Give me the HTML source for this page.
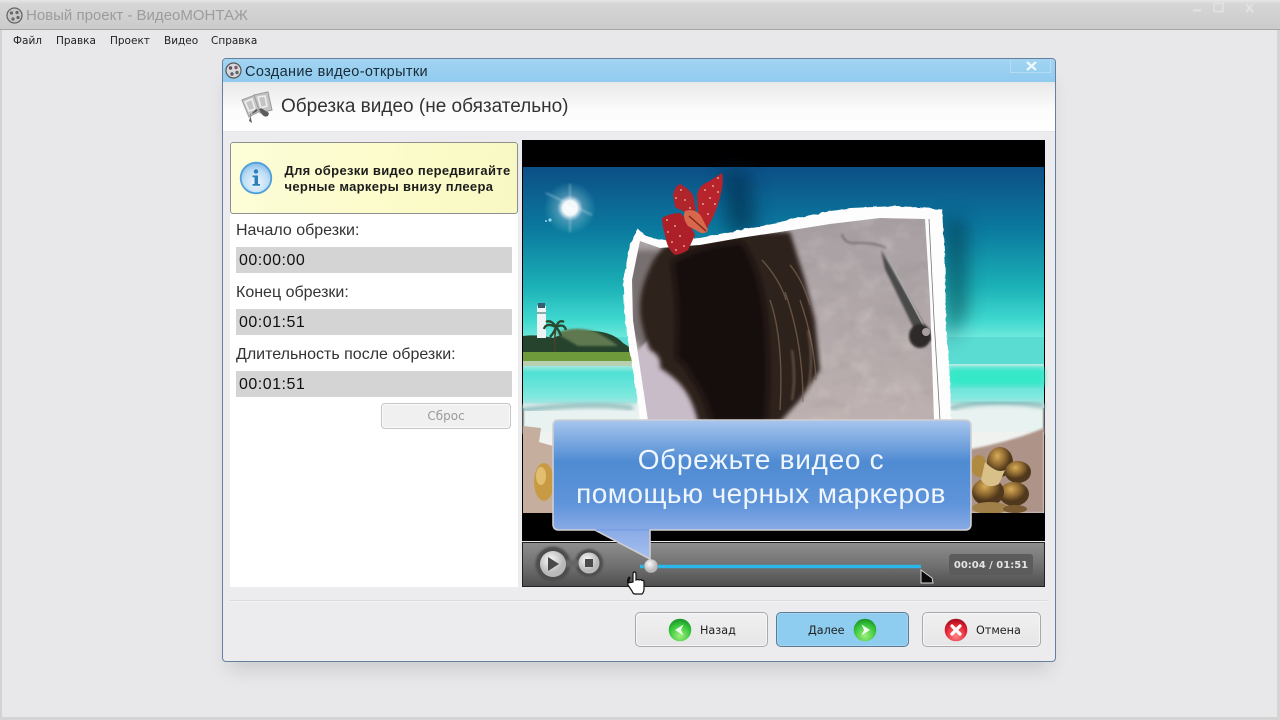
<!DOCTYPE html>
<html lang="ru"><head><meta charset="utf-8"><title>ВидеоМОНТАЖ</title>
<style>
*{box-sizing:border-box}
html,body{margin:0;padding:0}
body{width:1280px;height:720px;overflow:hidden;position:relative;background:#e8e8ea;font-family:"DejaVu Sans","Liberation Sans",sans-serif;color:#111}
.a{position:absolute;white-space:nowrap}
.ls{font-family:"Liberation Sans",sans-serif}
.fld{position:absolute;left:236px;width:276px;height:26px;background:#d4d4d4;font:16px/28px "Liberation Sans",sans-serif;padding-left:3px;color:#111;letter-spacing:.5px}
.lbl{position:absolute;left:236px;font:16px/20px "Liberation Sans",sans-serif;color:#333;white-space:nowrap}
.btn{position:absolute;top:612px;height:35px;border:1px solid #a9a9ab;border-radius:5px;background:linear-gradient(#f0f0f0,#e6e6e8);box-shadow:inset 0 0 0 1px #f6f6f6;font:11.2px/35px "DejaVu Sans",sans-serif;color:#222}
.btn span{position:absolute;top:0;line-height:35px}
.btn svg{position:absolute;top:5px}
.m{position:absolute;top:34px;font:10.5px/14px "DejaVu Sans",sans-serif;color:#222;white-space:nowrap}
</style></head><body>
<!-- main window frame -->
<div class="a" style="left:0;top:0;width:1280px;height:30px;background:linear-gradient(#e6e6e6 0,#d6d6d6 4px,#cbcbcb 100%);border-bottom:1px solid #a6a6a6"></div>
<div class="a" style="left:0;top:30px;width:2px;height:690px;background:#d2d2d2"></div>
<div class="a" style="left:1277px;top:30px;width:3px;height:690px;background:#d4d4d4"></div>
<div class="a" style="left:0;top:717px;width:1280px;height:3px;background:#d4d4d4"></div>
<svg class="a" style="left:6px;top:7px" width="17" height="17" viewBox="0 0 17 17"><circle cx="8.5" cy="8.5" r="7.5" fill="#c8c8c8" stroke="#666" stroke-width="1.3"/><circle cx="5.5" cy="6" r="1.6" fill="#666"/><circle cx="11" cy="5.5" r="1.6" fill="#666"/><circle cx="12" cy="10.5" r="1.6" fill="#666"/><circle cx="7" cy="12" r="1.6" fill="#666"/></svg>
<div class="a ls" style="left:26px;top:6px;font-size:15px;line-height:19px;color:#9c9c9c">Новый проект - ВидеоМОНТАЖ</div>
<svg class="a" style="left:1190px;top:4px" width="14" height="10" fill="none" stroke="#e2e2e2" stroke-width="2"><path d="M3 6.500h8"/></svg>
<svg class="a" style="left:1212px;top:2px" width="14" height="11" fill="none" stroke="#e2e2e2" stroke-width="1.6"><rect x="2" y="1.5" width="9" height="8"/></svg>
<svg class="a" style="left:1244px;top:3px" width="12" height="11" fill="none" stroke="#e2e2e2" stroke-width="2"><path d="M2 1l7 8M9 1l-7 8"/></svg>
<div class="m" style="left:13px">Файл</div><div class="m" style="left:56px">Правка</div><div class="m" style="left:110px">Проект</div><div class="m" style="left:164px">Видео</div><div class="m" style="left:211px">Справка</div>

<!-- dialog -->
<div class="a" style="left:222px;top:58px;width:834px;height:604px;background:#ececee;border:1px solid #64809e;border-radius:4px;box-shadow:0 14px 18px -6px rgba(0,0,0,.12)"></div>
<div class="a" style="left:223px;top:59px;width:832px;height:23px;background:linear-gradient(#a3d4f2,#90cbee);border-radius:3px 3px 0 0"></div>
<div class="a" style="left:223px;top:82px;width:832px;height:50px;background:linear-gradient(#e8e8e8,#fbfbfb 55%,#fff);border-bottom:1px solid #e6e6e6"></div>
<div class="a" style="left:1010px;top:59px;width:41px;height:14px;border:1px solid #b4dcf4;border-top:0"></div>
<svg class="a" style="left:1026px;top:61px" width="11" height="10" fill="none" stroke="#eef8fd" stroke-width="2.2"><path d="M1 1l9 8M10 1l-9 8"/></svg>
<svg class="a" style="left:225px;top:62px" width="17" height="17" viewBox="0 0 17 17"><circle cx="8.5" cy="8.5" r="7.5" fill="#d8d8d8" stroke="#555" stroke-width="1.2"/><circle cx="5.5" cy="6" r="1.7" fill="#5a4f6a"/><circle cx="11" cy="5.5" r="1.7" fill="#7a5a70"/><circle cx="12" cy="10.5" r="1.7" fill="#5a6a60"/><circle cx="7" cy="12" r="1.7" fill="#5a5a7a"/></svg>
<div class="a ls" style="left:245px;top:64px;font-size:14.5px;line-height:17px;color:#1a2a38;letter-spacing:.35px">Создание видео-открытки</div>
<svg class="a" style="left:240px;top:91px" width="33" height="33" viewBox="0 0 33 33"><g fill="#c4c4c4" stroke="#9a9a9a"><path d="M2 9l13-5 5 16-11 6z"/><path d="M14 4l14-3 4 18-12 3z"/></g><g fill="none" stroke="#eee" stroke-width="1.6"><path d="M5 11l7-3 3 10-6 2zM18 6l7-1 2 10-6 2z"/></g><path d="M10 23q5 0 9-5l2 4q3 5 7 3l1-3-8-5-3 2-2-1-5 5-2 7 3 2z" fill="#5c5c5c"/></svg>
<div class="a ls" style="left:281px;top:95px;font-size:19px;line-height:23px;color:#333">Обрезка видео (не обязательно)</div>

<!-- left panel -->
<div class="a" style="left:230px;top:142px;width:288px;height:445px;background:#fff"></div>
<div class="a" style="left:230px;top:142px;width:288px;height:72px;background:linear-gradient(100deg,#fdfdd8,#fbfbc8 70%,#f8f8c4);border:1px solid #8f8f8f;border-radius:3px"></div>
<svg class="a" style="left:239px;top:161px" width="34" height="34" viewBox="0 0 34 34"><defs><radialGradient id="ib" cx=".5" cy=".65" r=".6"><stop offset="0" stop-color="#eef7fd"/><stop offset=".7" stop-color="#bcdcf4"/><stop offset="1" stop-color="#8cc0ea"/></radialGradient></defs><circle cx="17" cy="17" r="15.3" fill="url(#ib)" stroke="#4f9fdc" stroke-width="1.8"/><circle cx="17" cy="10.5" r="2.2" fill="#2a80b8"/><path d="M13.5 14.5h5.5v8.5h2v1.8h-7.5V23h2v-6.8h-2z" fill="#2a80b8"/></svg>
<div class="a" style="left:284.500px;top:163px;font-size:13px;line-height:16px;font-weight:bold;color:#1c1c1c;font-family:'Liberation Sans',sans-serif;letter-spacing:.33px">Для обрезки видео передвигайте<br>черные маркеры внизу плеера</div>
<div class="lbl" style="top:221px">Начало обрезки:</div>
<div class="fld" style="top:247px">00:00:00</div>
<div class="lbl" style="top:283px">Конец обрезки:</div>
<div class="fld" style="top:309px">00:01:51</div>
<div class="lbl" style="top:345px">Длительность после обрезки:</div>
<div class="fld" style="top:371px">00:01:51</div>
<div class="a" style="left:381px;top:403px;width:130px;height:26px;border:1px solid #c6c6c6;border-radius:4px;background:#f0f0f0;box-shadow:inset 0 0 0 1px #fafafa;text-align:center;font:12px/25px 'DejaVu Sans',sans-serif;color:#9a9a9a">Сброс</div>

<!-- video -->
<svg class="a" style="left:522px;top:140px;overflow:visible" width="523" height="447" viewBox="522 140 523 447">
<defs>
<linearGradient id="sky" x1="0" y1="0" x2="0" y2="1"><stop offset="0" stop-color="#0c4f86"/><stop offset=".37" stop-color="#0b7a9f"/><stop offset=".7" stop-color="#1bb0b6"/><stop offset=".9" stop-color="#3fd8cf"/><stop offset="1" stop-color="#6ee8dc"/></linearGradient>
<linearGradient id="sea" x1="0" y1="0" x2="0" y2="1"><stop offset="0" stop-color="#b8ece4"/><stop offset=".2" stop-color="#4fe0d4"/><stop offset=".75" stop-color="#80e8de"/><stop offset="1" stop-color="#c0e4e2"/></linearGradient>
<linearGradient id="call" gradientUnits="userSpaceOnUse" x1="0" y1="420" x2="0" y2="560"><stop offset="0" stop-color="#a8c6ee"/><stop offset=".3" stop-color="#4f8bd2"/><stop offset=".6" stop-color="#5f94da"/><stop offset=".78" stop-color="#88aae6"/><stop offset="1" stop-color="#a8c0f0"/></linearGradient>
<linearGradient id="ctl" x1="0" y1="0" x2="0" y2="1"><stop offset="0" stop-color="#8e8e8e"/><stop offset=".55" stop-color="#6f6f6f"/><stop offset="1" stop-color="#4e4e4e"/></linearGradient>
<linearGradient id="photo" x1="0" y1="0" x2="0" y2="1"><stop offset="0" stop-color="#a79fa3"/><stop offset="1" stop-color="#bdb1b0"/></linearGradient>
<radialGradient id="sun"><stop offset="0" stop-color="#fff"/><stop offset=".28" stop-color="#fff" stop-opacity=".95"/><stop offset=".5" stop-color="#cfe8f5" stop-opacity=".3"/><stop offset="1" stop-color="#9fd" stop-opacity="0"/></radialGradient>
<radialGradient id="knob" cx=".4" cy=".35"><stop offset="0" stop-color="#fafafa"/><stop offset="1" stop-color="#b9b9b9"/></radialGradient>
<radialGradient id="shell" cx=".4" cy=".3"><stop offset="0" stop-color="#d8ac58"/><stop offset=".6" stop-color="#8e6830"/><stop offset="1" stop-color="#50381c"/></radialGradient>
<filter id="b1"><feGaussianBlur stdDeviation="1"/></filter>
<filter id="b2"><feGaussianBlur stdDeviation="2"/></filter>
<filter id="b3"><feGaussianBlur stdDeviation="3"/></filter>
<filter id="b9" x="-200%" y="-100%" width="500%" height="300%"><feGaussianBlur stdDeviation="9"/></filter>
<filter id="torn" x="-5%" y="-5%" width="110%" height="110%"><feTurbulence type="fractalNoise" baseFrequency=".14" numOctaves="2" seed="4" result="n"/><feDisplacementMap in="SourceGraphic" in2="n" scale="3" xChannelSelector="R" yChannelSelector="G"/></filter>
<filter id="grain" x="0" y="0" width="100%" height="100%"><feTurbulence type="fractalNoise" baseFrequency=".025 .05" numOctaves="3" seed="7"/><feColorMatrix values="0 0 0 0 .3 0 0 0 0 .27 0 0 0 0 .27 2.4 0 0 0 -1.15"/></filter>
<filter id="grain2" x="0" y="0" width="100%" height="100%"><feTurbulence type="fractalNoise" baseFrequency=".04" numOctaves="3" seed="11"/><feColorMatrix values="0 0 0 0 .95 0 0 0 0 .9 0 0 0 0 .85 2.5 0 0 0 -1.2"/></filter>
<clipPath id="pc"><path d="M640 241L660 248 700 245 740 238 780 232 830 224 880 218 925 219 930 300 934 420 648 420 633 320 632 280z"/></clipPath>
</defs>
<rect x="522" y="140" width="523" height="401" fill="#000"/>
<rect x="523" y="167" width="521" height="170" fill="url(#sky)"/>
<!-- sun -->
<circle cx="570" cy="208" r="26" fill="url(#sun)"/>
<path d="M570 184v48M546 193l46 22" stroke="#dff2fa" stroke-width="1" opacity=".6" filter="url(#b1)"/>
<circle cx="550" cy="220" r="1.6" fill="#8fd8f0"/><circle cx="546" cy="221" r="1" fill="#8fd8f0"/>
<!-- sea & beach -->
<rect x="523" y="337" width="521" height="29" fill="#5adcd2"/>
<rect x="523" y="364" width="521" height="44" fill="url(#sea)"/>
<rect x="950" y="368" width="94" height="18" fill="#34e8c8" filter="url(#b3)"/>
<path d="M945 363h99" stroke="#d6ece8" stroke-width="4" filter="url(#b1)"/>
<rect x="523" y="404" width="521" height="30" fill="#e8f2f0" filter="url(#b1)"/>
<path d="M523 410q70-8 110-2M950 408q40-10 94-2" stroke="#7fb2b4" stroke-width="4" fill="none" filter="url(#b2)"/>
<path d="M523 432h521v81H523z" fill="#f0f2f0"/>
<path d="M523 426l18 2-2 14 14 4v67h-30z" fill="#c6ae9e"/>
<path d="M955 452q50-8 89-24v85h-89z" fill="#ae9488" filter="url(#b1)"/>
<!-- island -->
<path d="M523 336q14-2 30 2 18-8 40-7 20 1 30 12l14 9v4H523z" fill="#26432e"/>
<path d="M556 333q20-8 40-1 12 6 22 14h-40z" fill="#5e7850" filter="url(#b1)"/>
<rect x="523" y="352" width="118" height="10" fill="#6f9a3c"/>
<path d="M523 361h120v5H523z" fill="#b8d0b0"/>
<!-- lighthouse -->
<rect x="537" y="306" width="9" height="32" fill="#eef4f4"/><rect x="538" y="303" width="7" height="5" fill="#3a5a70"/><rect x="537" y="312" width="9" height="2" fill="#8aa"/>
<!-- palm -->
<path d="M555 351q-1-12 1-24" stroke="#4a4028" stroke-width="1.6" fill="none"/>
<path d="M556 327q-10-5-12 2M556 327q-5-8-10-5M556 327q3-8 8-5M556 327q8-4 10 3M556 327q-2 6-6 10M556 327q4 5 5 9" stroke="#274a30" stroke-width="2.4" fill="none"/>
<!-- shells left -->
<ellipse cx="544" cy="482" rx="10" ry="19" fill="#c89a44"/>
<ellipse cx="541" cy="476" rx="5" ry="9" fill="#e2be70"/>
<!-- shells right -->
<ellipse cx="1000" cy="462" rx="13" ry="15" fill="url(#shell)"/>
<ellipse cx="1018" cy="472" rx="13" ry="11" fill="url(#shell)"/>
<ellipse cx="979" cy="466" rx="8" ry="11" fill="#b08a40"/>
<ellipse cx="1014" cy="494" rx="15" ry="12" fill="url(#shell)"/>
<ellipse cx="988" cy="492" rx="16" ry="14" fill="url(#shell)"/>
<path d="M985 462q12 12 20 8l-6 14q-12 6-18-4z" fill="#d8c088"/>
<ellipse cx="990" cy="508" rx="18" ry="6" fill="#a08048"/>
<ellipse cx="1015" cy="509" rx="12" ry="4" fill="#7a5a30"/>
<rect x="523" y="513" width="521" height="28" fill="#000"/>
<!-- photo shadow -->
<path d="M945 214l22 10v90l-20 30z" fill="#02283a" opacity=".5" filter="url(#b9)"/>
<path d="M722 168l28 4 8 60-30 4z" fill="#03294a" opacity=".6" filter="url(#b9)"/>
<!-- white torn border -->
<path d="M638 228L646 236 660 240 700 238 740 230 780 222 820 213 850 208 897 206 942 209 945 260 946 320 950 380 951 420 640 420 625 320 623 280 630 245z" fill="#fdfdfd" filter="url(#torn)"/>
<!-- photo -->
<path d="M640 241L660 248 700 245 740 238 780 232 830 224 880 218 925 219 930 300 934 420 648 420 633 320 632 280z" fill="url(#photo)"/>
<g clip-path="url(#pc)">
<rect x="630" y="215" width="310" height="206" filter="url(#grain)" opacity=".3"/>
<rect x="630" y="215" width="310" height="206" filter="url(#grain2)" opacity=".2"/>
<path d="M842 234q2 10 14 9 18-1 30 5" stroke="#5e5658" stroke-width="1.5" fill="none" filter="url(#b1)" opacity=".8"/>
<!-- stick -->
<path d="M881 250l44 76 7 14-11 3-36-74z" fill="#4a4848" filter="url(#b1)"/>
<path d="M888 258l38 72" stroke="#a8a8a8" stroke-width="1.6"/>
<ellipse cx="920" cy="336" rx="11" ry="12" fill="#2e2c2c" filter="url(#b1)"/>
<ellipse cx="926" cy="332" rx="4" ry="4" fill="#a8a0a0"/>
<!-- left grey + fabric -->
<path d="M630 250l28 0 0 70-12 34-16-20z" fill="#77706f" filter="url(#b3)"/>
<path d="M638 425l-4-70q10-12 20-20l12 10 6 18q10 6 10 14 14 8 22 48z" fill="#c8bcc8" filter="url(#b1)"/>
<!-- hair -->
<path d="M790 232l15 48 10 40 5 50-20 30-20 22h-82q-6-26-20-40-8-8-18-14 2-12-10-18-6-14-9-30-4-24 8-50 10-26 28-30 30-12 60-8z" fill="#2e221c" filter="url(#b2)"/>
<path d="M672 262q30-18 70-20 20 30 24 80 4 50 0 100h-54q-8-30-20-44-4-12-16-20 4-50-4-96z" fill="#141010" filter="url(#b3)"/>
<g stroke="#7e6652" stroke-width="1.400" fill="none" opacity=".7"><path d="M770 300q14 40 10 110M785 292q18 50 18 110M800 300q14 40 16 80M762 260q18 20 24 40M790 265q12 14 20 40"/></g>
<g stroke="#a08c78" stroke-width="2" fill="none" opacity=".5" filter="url(#b1)"><path d="M808 330q6 30 0 60M792 350q4 30 0 50"/></g>
</g>
<path d="M929 219l5 100 6 101" stroke="#777" stroke-width=".8" fill="none"/>
<!-- butterfly -->
<path d="M722 173q2 8-1 20-3 14-9 26l-7 13-7-17-1-20q2-10 11-13z" fill="#b8242c"/>
<path d="M680 184q8 4 13 11l3 15-6 5-15-8-2-12q2-9 7-11z" fill="#b0242c"/>
<path d="M662 218q8-5 18-5l8 7 7 15-7 15q-6 4-13 5-8-6-10-20-3-10-3-17z" fill="#ae2029"/>
<path d="M685 211q10-3 16 5l7 14q-2 4-7 3l-13-7q-6-8-3-15z" fill="#d8684c"/>
<path d="M689 216l17 15" stroke="#7a2018" stroke-width="1.2"/>
<g fill="#e8c8b0"><circle cx="718" cy="178" r=".9"/><circle cx="713" cy="186" r=".9"/><circle cx="718" cy="192" r=".9"/><circle cx="705" cy="190" r=".9"/><circle cx="710" cy="198" r=".9"/><circle cx="715" cy="204" r=".9"/><circle cx="703" cy="204" r=".9"/><circle cx="708" cy="214" r=".9"/><circle cx="681" cy="190" r=".9"/><circle cx="676" cy="198" r=".9"/><circle cx="685" cy="200" r=".9"/><circle cx="690" cy="208" r=".9"/><circle cx="667" cy="220" r=".9"/><circle cx="668" cy="232" r=".9"/><circle cx="675" cy="226" r=".9"/><circle cx="672" cy="242" r=".9"/><circle cx="680" cy="236" r=".9"/><circle cx="684" cy="246" r=".9"/><circle cx="676" cy="250" r=".9"/></g>
<!-- controls -->
<rect x="522.500" y="542.500" width="522" height="44" fill="url(#ctl)" stroke="#222"/>
<g filter="url(#b1)"><circle cx="553" cy="564" r="17.500" fill="#4e4e4e"/><circle cx="589" cy="563" r="14" fill="#4e4e4e"/><rect x="565" y="560" width="14" height="7" fill="#666"/></g>
<circle cx="553" cy="564" r="13" fill="url(#knob)"/><path d="M548 557l11 7-11 7z" fill="#4a4a4a"/>
<circle cx="589" cy="563" r="10.500" fill="url(#knob)"/><rect x="585" y="559" width="8" height="8" fill="#4a4a4a"/>
<rect x="640" y="564.800" width="281" height="3.400" fill="#2ab8ec"/>
<circle cx="651" cy="566" r="7" fill="url(#knob)" stroke="#777" stroke-width=".5"/>
<path d="M921 570l11 8 1 5h-12z" fill="#0a0a0a" stroke="#d6d6d6" stroke-width="1"/>
<rect x="949" y="554" width="84" height="21" rx="3" fill="#5c5c5c"/>
<text x="991" y="568" text-anchor="middle" font-family="'DejaVu Sans',sans-serif" font-weight="bold" font-size="10" fill="#e4e4e4">00:04 / 01:51</text>
<!-- callout -->
<path d="M558 420H965q6 0 6 6V524q0 6-6 6H650V559L595 530H559q-6 0-6-6V426q0-6 5-6z" fill="url(#call)" stroke="#cfcfd2" stroke-width="1.600"/>
<path d="M596 529.800H649.200" stroke="#7da2e4" stroke-width="2.200"/>
<text font-family="'Liberation Sans',sans-serif" font-size="28" fill="#f0f6fd" text-anchor="middle"><tspan x="761" y="469" letter-spacing=".7">Обрежьте видео с</tspan><tspan x="761" y="503" letter-spacing=".44">помощью черных маркеров</tspan></text>
<!-- cursor -->
<path d="M630 577q-3 3-1 7l3 4" stroke="#111" stroke-width="2.500" fill="none"/>
<path d="M633 582V574q0-2 1.500-2t1.500 2v6q2-1 3 0 2-1 3 .5 2-.5 2 1.500v7q0 3-2 5h-7q-2 0-3-3l-4-6q-1-2.500 2.500-2.500z" fill="#fff" stroke="#111" stroke-width="1.200"/>
</svg>

<!-- footer -->
<div class="a" style="left:230px;top:600px;width:817px;height:2px;background:#dcdcdc;border-bottom:1px solid #f4f4f4"></div>
<div class="btn" style="left:635px;width:133px"><svg style="left:32px" width="24" height="24" viewBox="0 0 24 24"><defs><radialGradient id="g1" cx=".5" cy=".75" r=".7"><stop offset="0" stop-color="#9cf07c"/><stop offset=".7" stop-color="#36c43a"/><stop offset="1" stop-color="#1d9a2a"/></radialGradient></defs><circle cx="12" cy="12" r="11.300" fill="url(#g1)"/><path d="M15.500 6.500L7 12l8.500 5.500L13 12z" fill="#eefaea"/></svg><span style="left:64px">Назад</span></div>
<div class="btn" style="left:776px;width:133px;background:#8fcdf0;border-color:#5d7a92;box-shadow:inset 0 0 0 1px #9fd6f4"><span style="left:31px">Далее</span><svg style="left:76px" width="24" height="24" viewBox="0 0 24 24"><circle cx="12" cy="12" r="11.300" fill="url(#g1)"/><path d="M8.500 6.500L17 12l-8.500 5.500L11 12z" fill="#eefaea"/></svg></div>
<div class="btn" style="left:922px;width:119px"><svg style="left:21px" width="24" height="24" viewBox="0 0 24 24"><defs><radialGradient id="r1" cx=".5" cy=".75" r=".7"><stop offset="0" stop-color="#f88"/><stop offset=".7" stop-color="#e02030"/><stop offset="1" stop-color="#a81020"/></radialGradient></defs><circle cx="12" cy="12" r="11.300" fill="url(#r1)"/><path d="M8 8l8 8M16 8l-8 8" stroke="#fff" stroke-width="3.200" stroke-linecap="round"/></svg><span style="left:53px">Отмена</span></div>
</body></html>
